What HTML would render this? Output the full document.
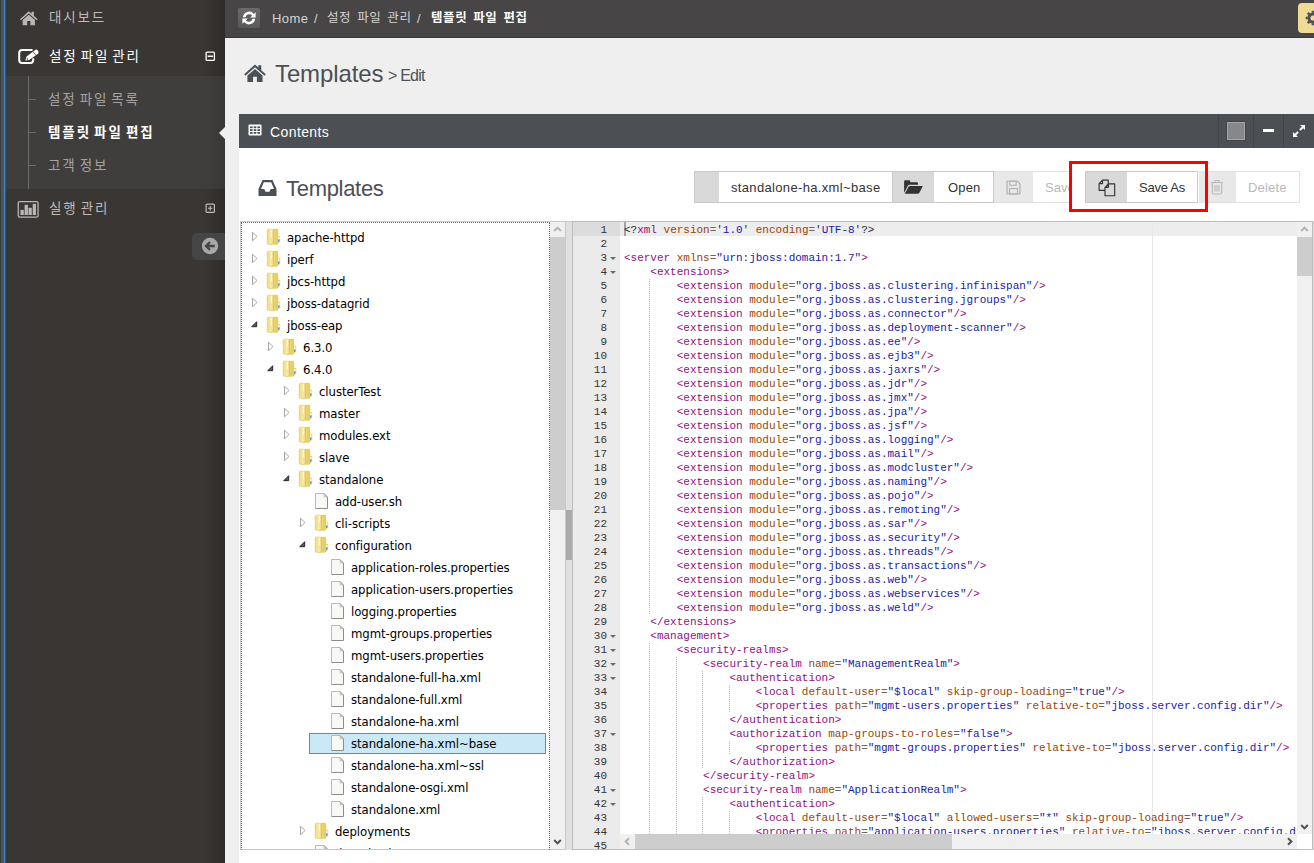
<!DOCTYPE html>
<html lang="ko"><head><meta charset="utf-8"><title>Templates &gt; Edit</title>
<style>
*{box-sizing:border-box;margin:0;padding:0}
html,body{width:1314px;height:863px;overflow:hidden}
body{position:relative;background:#efefef;font-family:"Liberation Sans","Noto Sans CJK KR",sans-serif;font-size:13px;color:#333}
.abs{position:absolute}
i{font-style:normal}
/* sidebar */
#side{left:6px;top:0;width:219px;height:863px;background:linear-gradient(to right,#3a3633 0,#3a3633 90%,#2e2b29 100%)}
#sub{left:6px;top:76px;width:219px;height:113px;background:linear-gradient(to right,#403e3d 0,#403e3d 92%,#393736 100%)}
.nav{position:absolute;left:49px;color:#c0bbb7;font-size:13.5px;letter-spacing:1.85px;word-spacing:-2.5px;line-height:20px;white-space:nowrap}
.nav.on{color:#fff}
.subnav{position:absolute;left:48px;color:#a5a3a1;font-size:13.5px;letter-spacing:1.85px;word-spacing:-2.5px;line-height:20px;white-space:nowrap}
.subnav.on{color:#fff;font-weight:bold;letter-spacing:1.9px}
/* top ribbon */
#ribbon{left:225px;top:0;width:1089px;height:38px;background:#474546;border-bottom:1px solid #3b393a}
.bc{position:absolute;top:9px;font-size:13px;line-height:20px;color:#d4d4d4;white-space:nowrap}
.bck{font-size:12.5px;top:8px;letter-spacing:.6px;word-spacing:1.9px}
/* panel */
#phead{left:239px;top:114px;width:1075px;height:34px;background:#4c4f53}
#pbody{left:239px;top:148px;width:1075px;height:715px;background:#fff}
/* toolbar */
.tb{position:absolute;top:171px;height:32px;border:1px solid #c9c9c9;background:#fff}
.tbi{position:absolute;top:0;left:0;height:30px;background:#d9d9d9}
.tbt{position:absolute;top:1px;height:30px;line-height:30px;font-size:13px;color:#333;white-space:nowrap}
/* tree */
#treebox{left:240px;top:221px;width:326px;height:629px;border:1px solid #c8c8c8;background:#fff}
#treedot{left:241px;top:222px;width:309px;height:628px;border:1px dotted #6e6e6e;border-bottom:0}
.tl{position:absolute;letter-spacing:-.06px;font-size:13px;line-height:22px;color:#000;white-space:nowrap;font-family:"DejaVu Sans Condensed","DejaVu Sans","Liberation Sans",sans-serif;font-stretch:condensed}
.sel{position:absolute;width:237px;height:21px;background:#cbe8f6;border:1px solid #26a0da}
#treeclip{left:241px;top:222px;width:309px;height:627px;overflow:hidden}
#treeclip>div{position:absolute;left:-241px;top:-222px;width:1314px;height:863px}
/* editor */
#ed{left:572px;top:221px;width:741px;height:629px;border:1px solid #bdbdbd;background:#fff;overflow:hidden;font-family:"Liberation Mono",monospace;font-size:11px;line-height:14px}
#gut{position:absolute;left:0;top:0;width:47px;height:629px;background:#ebebeb;color:#333}
#gut .gn{height:14px;text-align:right;padding-right:13px;position:relative;white-space:pre}
#gut .fw{position:absolute;right:4px;top:6px;width:0;height:0;border-left:3px solid transparent;border-right:3px solid transparent;border-top:3px solid #6b6b6b}
#code{position:absolute;left:51px;top:1px;width:800px;height:629px}
#code .ln{height:14px;white-space:pre;color:#000;letter-spacing:-.015px}
.t{color:#930f80}.a{color:#994409}.v{color:#1a1aa6}.p{color:#68685b}.m{color:#2b2b2b}.k{color:#68685b}
.ig{position:absolute;width:1px;height:14px;background:repeating-linear-gradient(to bottom,#bdbdbd 0,#bdbdbd 1px,transparent 1px,transparent 2px)}
</style></head><body>
<svg width="0" height="0" style="position:absolute">
<defs>
<linearGradient id="fg1" x1="0" y1="0" x2="1" y2="0"><stop offset="0" stop-color="#efd976"/><stop offset=".6" stop-color="#f6eaa6"/><stop offset="1" stop-color="#efdd8c"/></linearGradient>
<linearGradient id="fg2" x1="0" y1="0" x2="1" y2="0"><stop offset="0" stop-color="#ecd67a"/><stop offset="1" stop-color="#e3ca62"/></linearGradient>
<linearGradient id="fg3" x1="0" y1="0" x2="0" y2="1"><stop offset="0" stop-color="#ffffff"/><stop offset=".55" stop-color="#9fd3ef"/><stop offset="1" stop-color="#3fa3dd"/></linearGradient>
<g id="folder">
<rect x="11.2" y="8" width="2.7" height="6.4" rx=".8" fill="#ead67a" stroke="#d9c260" stroke-width=".4"/>
<rect x="6.8" y="1.1" width="5.1" height="15.3" rx="1.2" fill="url(#fg2)" stroke="#dcc463" stroke-width=".4"/>
<rect x="12.1" y="9" width="1.3" height="2.4" fill="#fff"/>
<rect x="12.1" y="11.4" width="1.3" height="2.3" fill="#3a9fe0"/>
<rect x="4" y="15.6" width="3" height="1.4" rx=".5" fill="#e3cc66"/>
<rect x="1" y="1" width="6.3" height="15.4" rx="1.4" fill="url(#fg1)" stroke="#dfc96c" stroke-width=".4"/>
<rect x="4.9" y="1.8" width=".9" height="7.4" fill="#fffef4" opacity=".95"/>
<rect x="7" y="1.4" width=".5" height="14.6" fill="#cfb54c" opacity=".8"/>
</g>
<g id="file">
<path d="M1.5 1.5 L10 1.5 L13.5 5 L13.5 16.5 L1.5 16.5 Z" fill="#f8f8f5"/>
<path d="M1.5 16.5 L1.5 1.5 L10 1.5" fill="none" stroke="#b9b9b9" stroke-width="1"/>
<path d="M10 1.5 L13.5 5 L13.5 16.5 L1.5 16.5" fill="none" stroke="#8c8c8c" stroke-width="1"/>
<path d="M10.2 2.2 L10.2 4.8 L12.8 4.8 Z" fill="#fff" stroke="#a8a8a8" stroke-width=".8"/>
</g>
<g id="home"><path d="M10 1.2 L12.8 3.6 L12.8 1.8 L15.2 1.8 L15.2 5.7 L19 9 L18 10.1 L10 3.4 L2 10.1 L1 9 Z"/><path d="M10 4.7 L16.3 9.9 L16.3 15 L11.6 15 L11.6 10.8 L8.4 10.8 L8.4 15 L3.7 15 L3.7 9.9 Z"/></g>
</defs></svg>

<!-- left strip -->
<div class="abs" style="left:0;top:0;width:1px;height:863px;background:#3a3a3a"></div>
<div class="abs" style="left:1px;top:0;width:3px;height:863px;background:#535353"></div>
<div class="abs" style="left:4px;top:0;width:1px;height:863px;background:#2b8bd8"></div>
<div class="abs" style="left:5px;top:0;width:1px;height:863px;background:#35556f"></div>

<!-- sidebar -->
<div class="abs" id="side"></div>
<div class="abs" id="sub"></div>
<svg class="abs" style="left:18.5px;top:9.7px" width="19.6" height="16.3" viewBox="0 0 20 16" preserveAspectRatio="none" fill="#b9b6b3"><use href="#home"/></svg>
<span class="nav" style="top:8px">대시보드</span>
<!-- edit icon -->
<svg class="abs" style="left:17px;top:48px" width="23" height="18" viewBox="0 0 23 18"><path d="M15.5 1.9 H5.2 Q2.2 1.9 2.2 4.9 V12 Q2.2 15 5.2 15 H13.2 Q16.2 15 16.2 12 V10.2" fill="none" stroke="#fff" stroke-width="2"/><path d="M9.58 8.54 L18.52 1.86 Q19.64 1.22 20.44 2.32 L21.34 3.62 Q21.94 4.62 21.16 5.38 L12.22 12.06 L8.3 12.5 Z" fill="#fff" stroke="#3a3633" stroke-width="1" paint-order="stroke"/><path d="M16.1 3.66 L18.76 7.18" stroke="#3a3633" stroke-width=".7"/><circle cx="10.3" cy="10.9" r=".75" fill="#3a3633"/></svg>
<span class="nav on" style="top:47px">설정 파일 관리</span>
<svg class="abs" style="left:205px;top:51px" width="11" height="11" viewBox="0 0 11 11"><rect x="1.1" y="1.1" width="8.3" height="8.3" rx="1" fill="none" stroke="#fff" stroke-width="1.3"/><path d="M2.6 5.25 H7.9" stroke="#fff" stroke-width="1.5"/></svg>
<!-- submenu tree lines -->
<div class="abs" style="left:28px;top:76px;width:1px;height:113px;background:#6e6c6a"></div>
<div class="abs" style="left:28px;top:99px;width:8px;height:1px;background:#6e6c6a"></div>
<div class="abs" style="left:28px;top:132px;width:8px;height:1px;background:#6e6c6a"></div>
<div class="abs" style="left:28px;top:165px;width:8px;height:1px;background:#6e6c6a"></div>
<span class="subnav" style="top:90px">설정 파일 목록</span>
<span class="subnav on" style="top:123px">템플릿 파일 편집</span>
<span class="subnav" style="top:156px">고객 정보</span>
<svg class="abs" style="left:219px;top:127px" width="6" height="12" viewBox="0 0 6 12"><path d="M6 0 L0 6 L6 12 Z" fill="#efefef"/></svg>
<!-- chart icon -->
<svg class="abs" style="left:17px;top:200px" width="22" height="18" viewBox="0 0 22 18"><rect x="1.25" y="1.55" width="19.8" height="15.6" rx="1.6" fill="none" stroke="#b9b6b3" stroke-width="1.3"/><rect x="3.4" y="9.9" width="3.4" height="5.1" fill="#b9b6b3"/><rect x="7.6" y="4.8" width="3.3" height="10.2" fill="#b9b6b3"/><rect x="11.5" y="7.8" width="3.3" height="7.2" fill="#b9b6b3"/><rect x="15.7" y="3.9" width="3.3" height="11.1" fill="#b9b6b3"/></svg>
<span class="nav" style="top:199px">실행 관리</span>
<svg class="abs" style="left:205px;top:203px" width="11" height="11" viewBox="0 0 11 11"><rect x="1.1" y="1.1" width="8.3" height="8.3" rx="1" fill="none" stroke="#c0bbb7" stroke-width="1.2"/><path d="M3 5.25 H7.5 M5.25 3 V7.5" stroke="#c0bbb7" stroke-width="1.2"/></svg>
<!-- minify -->
<div class="abs" style="left:192px;top:233px;width:33px;height:27px;background:#454545;border-radius:5px 0 0 5px"></div>
<svg class="abs" style="left:201px;top:237px" width="18" height="18" viewBox="0 0 18 18"><circle cx="9" cy="9" r="8.2" fill="#a8a8a8"/><path d="M13.8 9 H5.5 M9 5 L5 9 L9 13" fill="none" stroke="#454545" stroke-width="2.3"/></svg>

<!-- ribbon -->
<div class="abs" id="ribbon">
  <div class="abs" style="left:13px;top:8px;width:22px;height:20px;background:linear-gradient(#6a6a6a,#595959);border-radius:2px"></div>
  <svg class="abs" style="left:16px;top:10px" width="16" height="16" viewBox="0 0 14 14"><path d="M1.6 6.3 A5.5 5.5 0 0 1 11.3 3.4 L12.8 1.9 V6.6 H8.1 L9.8 4.9 A3.4 3.4 0 0 0 3.9 6.3 Z M12.4 7.7 A5.5 5.5 0 0 1 2.7 10.6 L1.2 12.1 V7.4 H5.9 L4.2 9.1 A3.4 3.4 0 0 0 10.1 7.7 Z" fill="#fff"/></svg>
  <span class="bc" style="left:47px;letter-spacing:.45px">Home</span><span class="bc" style="left:89px">/</span>
  <span class="bc bck" style="left:102px">설정 파일 관리</span><span class="bc" style="left:192px">/</span>
  <span class="bc bck" style="left:206px;color:#fff;font-weight:bold">템플릿 파일 편집</span>
  <div class="abs" style="left:1073px;top:3px;width:30px;height:30px;background:#efdb95;border-radius:4px"></div>
  <svg class="abs" style="left:1080px;top:10px" width="16" height="16" viewBox="0 0 18 18"><circle cx="9" cy="9" r="4.6" fill="none" stroke="#4c4f53" stroke-width="3.4"/><g stroke="#4c4f53" stroke-width="3"><path d="M9 0.8 V3 M9 15 V17.2 M0.8 9 H3 M15 9 H17.2 M3.2 3.2 L4.8 4.8 M13.2 13.2 L14.8 14.8 M3.2 14.8 L4.8 13.2 M13.2 4.8 L14.8 3.2"/></g></svg>
</div>

<!-- title -->
<svg class="abs" style="left:243px;top:63px" width="24" height="20.2" viewBox="0 0 20 16" preserveAspectRatio="none" fill="#4c4f53"><use href="#home"/></svg>
<span class="abs" style="left:275px;top:59px;font-size:24px;line-height:30px;color:#4c4f53;white-space:nowrap;letter-spacing:-.12px">Templates</span>
<span class="abs" style="left:388px;top:65px;font-size:16px;line-height:22px;color:#4c4f53;white-space:nowrap;letter-spacing:-.8px">&gt; Edit</span>

<!-- panel -->
<div class="abs" id="phead">
  <svg class="abs" style="left:9px;top:10px" width="14" height="12" viewBox="0 0 14 12"><rect x=".5" y=".5" width="13" height="11" rx="1" fill="#fff"/><g fill="#4c4f53"><rect x="2" y="2.4" width="2.6" height="1.8"/><rect x="5.7" y="2.4" width="2.6" height="1.8"/><rect x="9.4" y="2.4" width="2.6" height="1.8"/><rect x="2" y="5.2" width="2.6" height="1.8"/><rect x="5.7" y="5.2" width="2.6" height="1.8"/><rect x="9.4" y="5.2" width="2.6" height="1.8"/><rect x="2" y="8" width="2.6" height="1.8"/><rect x="5.7" y="8" width="2.6" height="1.8"/><rect x="9.4" y="8" width="2.6" height="1.8"/></g></svg>
  <span class="abs" style="left:31px;top:8px;font-size:14px;line-height:20px;color:#fff;white-space:nowrap;letter-spacing:.4px">Contents</span>
  <div class="abs" style="left:979px;top:0;width:1px;height:34px;background:#414448"></div>
  <div class="abs" style="left:1014px;top:0;width:1px;height:34px;background:#414448"></div>
  <div class="abs" style="left:1044px;top:0;width:1px;height:34px;background:#414448"></div>
  <div class="abs" style="left:988px;top:8px;width:18px;height:18px;background:#85878b;border:1px solid #a3a5a8;box-shadow:0 0 0 1px #404347"></div>
  <div class="abs" style="left:1024px;top:15px;width:11px;height:3px;background:#fff"></div>
  <svg class="abs" style="left:1053px;top:10px" width="14" height="14" viewBox="0 0 14 14"><path d="M8 1 H13 V6 L11.2 4.2 L8.6 6.8 L7.2 5.4 L9.8 2.8 Z M6 13 H1 V8 L2.8 9.8 L5.4 7.2 L6.8 8.6 L4.2 11.2 Z" fill="#fff"/></svg>
</div>
<div class="abs" id="pbody"></div>

<!-- inner heading -->
<svg class="abs" style="left:258px;top:179px" width="19" height="18" viewBox="0 0 19 17" preserveAspectRatio="none"><path d="M4.5 1 H14.5 L18.5 9.5 V16 H0.5 V9.5 Z M5.8 3 L3 9.5 H6.3 L7.5 12 H11.5 L12.7 9.5 H16 L13.2 3 Z" fill="#4c4f53" fill-rule="evenodd"/></svg>
<span class="abs" style="left:286px;top:174px;font-size:22px;line-height:30px;color:#4c4f53;white-space:nowrap;letter-spacing:-.3px">Templates</span>

<!-- toolbar -->
<div class="tb" style="left:694px;width:300px">
  <div class="tbi" style="width:24px"></div>
  <span class="tbt" style="left:36px;letter-spacing:.34px">standalone-ha.xml~base</span>
  <div class="tbi" style="left:197px;width:42px;border-left:1px solid #c9c9c9"></div>
  <svg class="abs" style="left:208px;top:7px" width="20" height="15.6" viewBox="0 0 18 14"><path d="M1 12.5 V2 Q1 1 2 1 H5.5 Q6.5 1 6.5 2 V2.8 H12.5 Q13.5 2.8 13.5 3.8 V5.2 H6 Q4.8 5.2 4.2 6.2 Z" fill="#333"/><path d="M1.6 13.2 L5 7 Q5.4 6.3 6.2 6.3 H17.2 Q18 6.3 17.6 7 L14.6 12.5 Q14.2 13.2 13.4 13.2 Z" fill="#333"/></svg>
  <span class="tbt" style="left:253px;letter-spacing:.15px">Open</span>
</div>
<div class="tb" style="left:994px;width:78px;border-color:#e1e1e1;border-left:0;border-right:0;overflow:hidden">
  <div class="tbi" style="width:39px;background:#e8e8e8"></div>
  <svg class="abs" style="left:12px;top:8px" width="15" height="15" viewBox="0 0 14 14"><path d="M1 1 H10.5 L13 3.5 V13 H1 Z" fill="none" stroke="#b5b5b5" stroke-width="1.2"/><rect x="3.5" y="1.3" width="6" height="3.6" fill="none" stroke="#b5b5b5" stroke-width="1.1"/><rect x="3.3" y="8" width="7.4" height="5" fill="none" stroke="#b5b5b5" stroke-width="1.1"/></svg>
  <span class="tbt" style="left:51px;color:#b9b9b9">Save</span>
</div>
<div class="tb" style="left:1085px;width:113px;border-color:#c9c9c9">
  <div class="tbi" style="width:41px"></div>
  <svg class="abs" style="left:12px;top:7px" width="19.4" height="18.4" viewBox="0 0 18 17"><path d="M4.2 1 H9.5 V10.5 H1 V4.2 Z M1 4.2 H4.2 V1" fill="#d9d9d9" stroke="#333" stroke-width="1.05" stroke-linejoin="round"/><path d="M9.7 4.5 H15.5 V15.5 H6.5 V7.7 Z M6.5 7.7 H9.7 V4.5" fill="#d9d9d9" stroke="#333" stroke-width="1.05" stroke-linejoin="round"/></svg>
  <span class="tbt" style="left:53px;letter-spacing:-.25px">Save As</span>
</div>
<div class="tb" style="left:1199px;width:101px;border-color:#e1e1e1;border-left:0">
  <div class="tbi" style="width:37px;background:#e8e8e8"></div>
  <svg class="abs" style="left:11px;top:7px" width="14" height="16" viewBox="0 0 14 16"><path d="M1 3.5 H13 M5 3.5 V1.5 H9 V3.5 M2.3 3.5 V13.5 Q2.3 15 3.8 15 H10.2 Q11.7 15 11.7 13.5 V3.5 M5 6 V12.5 M7 6 V12.5 M9 6 V12.5" fill="none" stroke="#b9b9b9" stroke-width="1.1"/></svg>
  <span class="tbt" style="left:49px;color:#b9b9b9;letter-spacing:.2px">Delete</span>
</div>

<!-- tree -->
<div class="abs" id="treebox"></div>
<div class="abs" id="treeclip"><div>
<svg class="abs" style="left:251px;top:231px" width="8" height="11" viewBox="0 0 8 11"><path d="M1.5 1.2 L6 5.5 L1.5 9.8 Z" fill="#fff" stroke="#a6a6a6" stroke-width="1"/></svg><svg class="abs" style="left:266px;top:228px" width="17" height="18" viewBox="0 0 17 18"><use href="#folder"/></svg><span class="tl" style="left:287px;top:227px">apache-httpd</span>
<svg class="abs" style="left:251px;top:253px" width="8" height="11" viewBox="0 0 8 11"><path d="M1.5 1.2 L6 5.5 L1.5 9.8 Z" fill="#fff" stroke="#a6a6a6" stroke-width="1"/></svg><svg class="abs" style="left:266px;top:250px" width="17" height="18" viewBox="0 0 17 18"><use href="#folder"/></svg><span class="tl" style="left:287px;top:249px">iperf</span>
<svg class="abs" style="left:251px;top:275px" width="8" height="11" viewBox="0 0 8 11"><path d="M1.5 1.2 L6 5.5 L1.5 9.8 Z" fill="#fff" stroke="#a6a6a6" stroke-width="1"/></svg><svg class="abs" style="left:266px;top:272px" width="17" height="18" viewBox="0 0 17 18"><use href="#folder"/></svg><span class="tl" style="left:287px;top:271px">jbcs-httpd</span>
<svg class="abs" style="left:251px;top:297px" width="8" height="11" viewBox="0 0 8 11"><path d="M1.5 1.2 L6 5.5 L1.5 9.8 Z" fill="#fff" stroke="#a6a6a6" stroke-width="1"/></svg><svg class="abs" style="left:266px;top:294px" width="17" height="18" viewBox="0 0 17 18"><use href="#folder"/></svg><span class="tl" style="left:287px;top:293px">jboss-datagrid</span>
<svg class="abs" style="left:250px;top:320px" width="8" height="8" viewBox="0 0 8 8"><path d="M6.7 1.7 L6.7 6.7 L1.7 6.7 Z" fill="#595959" stroke="#1e1e1e" stroke-width=".9"/></svg><svg class="abs" style="left:266px;top:316px" width="17" height="18" viewBox="0 0 17 18"><use href="#folder"/></svg><span class="tl" style="left:287px;top:315px">jboss-eap</span>
<svg class="abs" style="left:267px;top:341px" width="8" height="11" viewBox="0 0 8 11"><path d="M1.5 1.2 L6 5.5 L1.5 9.8 Z" fill="#fff" stroke="#a6a6a6" stroke-width="1"/></svg><svg class="abs" style="left:282px;top:338px" width="17" height="18" viewBox="0 0 17 18"><use href="#folder"/></svg><span class="tl" style="left:303px;top:337px">6.3.0</span>
<svg class="abs" style="left:266px;top:364px" width="8" height="8" viewBox="0 0 8 8"><path d="M6.7 1.7 L6.7 6.7 L1.7 6.7 Z" fill="#595959" stroke="#1e1e1e" stroke-width=".9"/></svg><svg class="abs" style="left:282px;top:360px" width="17" height="18" viewBox="0 0 17 18"><use href="#folder"/></svg><span class="tl" style="left:303px;top:359px">6.4.0</span>
<svg class="abs" style="left:283px;top:385px" width="8" height="11" viewBox="0 0 8 11"><path d="M1.5 1.2 L6 5.5 L1.5 9.8 Z" fill="#fff" stroke="#a6a6a6" stroke-width="1"/></svg><svg class="abs" style="left:298px;top:382px" width="17" height="18" viewBox="0 0 17 18"><use href="#folder"/></svg><span class="tl" style="left:319px;top:381px">clusterTest</span>
<svg class="abs" style="left:283px;top:407px" width="8" height="11" viewBox="0 0 8 11"><path d="M1.5 1.2 L6 5.5 L1.5 9.8 Z" fill="#fff" stroke="#a6a6a6" stroke-width="1"/></svg><svg class="abs" style="left:298px;top:404px" width="17" height="18" viewBox="0 0 17 18"><use href="#folder"/></svg><span class="tl" style="left:319px;top:403px">master</span>
<svg class="abs" style="left:283px;top:429px" width="8" height="11" viewBox="0 0 8 11"><path d="M1.5 1.2 L6 5.5 L1.5 9.8 Z" fill="#fff" stroke="#a6a6a6" stroke-width="1"/></svg><svg class="abs" style="left:298px;top:426px" width="17" height="18" viewBox="0 0 17 18"><use href="#folder"/></svg><span class="tl" style="left:319px;top:425px">modules.ext</span>
<svg class="abs" style="left:283px;top:451px" width="8" height="11" viewBox="0 0 8 11"><path d="M1.5 1.2 L6 5.5 L1.5 9.8 Z" fill="#fff" stroke="#a6a6a6" stroke-width="1"/></svg><svg class="abs" style="left:298px;top:448px" width="17" height="18" viewBox="0 0 17 18"><use href="#folder"/></svg><span class="tl" style="left:319px;top:447px">slave</span>
<svg class="abs" style="left:282px;top:474px" width="8" height="8" viewBox="0 0 8 8"><path d="M6.7 1.7 L6.7 6.7 L1.7 6.7 Z" fill="#595959" stroke="#1e1e1e" stroke-width=".9"/></svg><svg class="abs" style="left:298px;top:470px" width="17" height="18" viewBox="0 0 17 18"><use href="#folder"/></svg><span class="tl" style="left:319px;top:469px">standalone</span>
<svg class="abs" style="left:314px;top:492px" width="15" height="18" viewBox="0 0 15 18"><use href="#file"/></svg><span class="tl" style="left:335px;top:491px">add-user.sh</span>
<svg class="abs" style="left:299px;top:517px" width="8" height="11" viewBox="0 0 8 11"><path d="M1.5 1.2 L6 5.5 L1.5 9.8 Z" fill="#fff" stroke="#a6a6a6" stroke-width="1"/></svg><svg class="abs" style="left:314px;top:514px" width="17" height="18" viewBox="0 0 17 18"><use href="#folder"/></svg><span class="tl" style="left:335px;top:513px">cli-scripts</span>
<svg class="abs" style="left:298px;top:540px" width="8" height="8" viewBox="0 0 8 8"><path d="M6.7 1.7 L6.7 6.7 L1.7 6.7 Z" fill="#595959" stroke="#1e1e1e" stroke-width=".9"/></svg><svg class="abs" style="left:314px;top:536px" width="17" height="18" viewBox="0 0 17 18"><use href="#folder"/></svg><span class="tl" style="left:335px;top:535px">configuration</span>
<svg class="abs" style="left:330px;top:558px" width="15" height="18" viewBox="0 0 15 18"><use href="#file"/></svg><span class="tl" style="left:351px;top:557px">application-roles.properties</span>
<svg class="abs" style="left:330px;top:580px" width="15" height="18" viewBox="0 0 15 18"><use href="#file"/></svg><span class="tl" style="left:351px;top:579px">application-users.properties</span>
<svg class="abs" style="left:330px;top:602px" width="15" height="18" viewBox="0 0 15 18"><use href="#file"/></svg><span class="tl" style="left:351px;top:601px">logging.properties</span>
<svg class="abs" style="left:330px;top:624px" width="15" height="18" viewBox="0 0 15 18"><use href="#file"/></svg><span class="tl" style="left:351px;top:623px">mgmt-groups.properties</span>
<svg class="abs" style="left:330px;top:646px" width="15" height="18" viewBox="0 0 15 18"><use href="#file"/></svg><span class="tl" style="left:351px;top:645px">mgmt-users.properties</span>
<svg class="abs" style="left:330px;top:668px" width="15" height="18" viewBox="0 0 15 18"><use href="#file"/></svg><span class="tl" style="left:351px;top:667px">standalone-full-ha.xml</span>
<svg class="abs" style="left:330px;top:690px" width="15" height="18" viewBox="0 0 15 18"><use href="#file"/></svg><span class="tl" style="left:351px;top:689px">standalone-full.xml</span>
<svg class="abs" style="left:330px;top:712px" width="15" height="18" viewBox="0 0 15 18"><use href="#file"/></svg><span class="tl" style="left:351px;top:711px">standalone-ha.xml</span>
<div class="sel" style="left:309px;top:733px"></div><svg class="abs" style="left:330px;top:734px" width="15" height="18" viewBox="0 0 15 18"><use href="#file"/></svg><span class="tl" style="left:351px;top:733px">standalone-ha.xml~base</span>
<svg class="abs" style="left:330px;top:756px" width="15" height="18" viewBox="0 0 15 18"><use href="#file"/></svg><span class="tl" style="left:351px;top:755px">standalone-ha.xml~ssl</span>
<svg class="abs" style="left:330px;top:778px" width="15" height="18" viewBox="0 0 15 18"><use href="#file"/></svg><span class="tl" style="left:351px;top:777px">standalone-osgi.xml</span>
<svg class="abs" style="left:330px;top:800px" width="15" height="18" viewBox="0 0 15 18"><use href="#file"/></svg><span class="tl" style="left:351px;top:799px">standalone.xml</span>
<svg class="abs" style="left:299px;top:825px" width="8" height="11" viewBox="0 0 8 11"><path d="M1.5 1.2 L6 5.5 L1.5 9.8 Z" fill="#fff" stroke="#a6a6a6" stroke-width="1"/></svg><svg class="abs" style="left:314px;top:822px" width="17" height="18" viewBox="0 0 17 18"><use href="#folder"/></svg><span class="tl" style="left:335px;top:821px">deployments</span>
<svg class="abs" style="left:314px;top:844px" width="15" height="18" viewBox="0 0 15 18"><use href="#file"/></svg><span class="tl" style="left:335px;top:843px">domain.sh</span>
</div></div>
<div class="abs" id="treedot"></div>
<!-- tree scrollbar -->
<div class="abs" style="left:550px;top:222px;width:15px;height:627px;background:#f0f0f0"></div>
<div class="abs" style="left:550px;top:237px;width:15px;height:273px;background:#cdcdcd"></div>
<svg class="abs" style="left:553px;top:225px" width="9" height="8" viewBox="0 0 9 8"><path d="M1.2 6 L4.5 2.6 L7.8 6" fill="none" stroke="#b4b4b4" stroke-width="2"/></svg>
<svg class="abs" style="left:553px;top:838px" width="9" height="8" viewBox="0 0 9 8"><path d="M1.2 2 L4.5 5.4 L7.8 2" fill="none" stroke="#505050" stroke-width="2"/></svg>
<!-- splitter -->
<div class="abs" style="left:566px;top:221px;width:6px;height:1px;background:#c8c8c8"></div>
<div class="abs" style="left:566px;top:222px;width:6px;height:628px;background:#e0e0e0"></div>
<div class="abs" style="left:566px;top:510px;width:6px;height:50px;background:#aaa"></div>

<!-- editor -->
<div class="abs" id="ed">
 <div class="abs" style="left:0;top:0;width:47px;height:14px;background:#dcdcdc;z-index:1"></div>
 <div id="gut"><div style="position:relative;z-index:2;top:1px">
<div class="gn">1</div>
<div class="gn">2</div>
<div class="gn">3<i class="fw"></i></div>
<div class="gn">4<i class="fw"></i></div>
<div class="gn">5</div>
<div class="gn">6</div>
<div class="gn">7</div>
<div class="gn">8</div>
<div class="gn">9</div>
<div class="gn">10</div>
<div class="gn">11</div>
<div class="gn">12</div>
<div class="gn">13</div>
<div class="gn">14</div>
<div class="gn">15</div>
<div class="gn">16</div>
<div class="gn">17</div>
<div class="gn">18</div>
<div class="gn">19</div>
<div class="gn">20</div>
<div class="gn">21</div>
<div class="gn">22</div>
<div class="gn">23</div>
<div class="gn">24</div>
<div class="gn">25</div>
<div class="gn">26</div>
<div class="gn">27</div>
<div class="gn">28</div>
<div class="gn">29</div>
<div class="gn">30<i class="fw"></i></div>
<div class="gn">31<i class="fw"></i></div>
<div class="gn">32<i class="fw"></i></div>
<div class="gn">33<i class="fw"></i></div>
<div class="gn">34</div>
<div class="gn">35</div>
<div class="gn">36</div>
<div class="gn">37<i class="fw"></i></div>
<div class="gn">38</div>
<div class="gn">39</div>
<div class="gn">40</div>
<div class="gn">41<i class="fw"></i></div>
<div class="gn">42<i class="fw"></i></div>
<div class="gn">43</div>
<div class="gn">44</div>
<div class="gn">45</div>
 </div></div>
 <div class="abs" style="left:47px;top:0;width:700px;height:14px;background:rgba(0,0,0,.07)"></div>
 <div class="abs" style="left:579px;top:0;width:1px;height:629px;background:#e8e8e8"></div>
 <div class="abs" style="left:51px;top:0;width:2px;height:14px;background:#a2a2a2"></div>
 <div id="code">
<i class="ig" style="left:25.4px;top:56px"></i><i class="ig" style="left:25.4px;top:70px"></i><i class="ig" style="left:25.4px;top:84px"></i><i class="ig" style="left:25.4px;top:98px"></i><i class="ig" style="left:25.4px;top:112px"></i><i class="ig" style="left:25.4px;top:126px"></i><i class="ig" style="left:25.4px;top:140px"></i><i class="ig" style="left:25.4px;top:154px"></i><i class="ig" style="left:25.4px;top:168px"></i><i class="ig" style="left:25.4px;top:182px"></i><i class="ig" style="left:25.4px;top:196px"></i><i class="ig" style="left:25.4px;top:210px"></i><i class="ig" style="left:25.4px;top:224px"></i><i class="ig" style="left:25.4px;top:238px"></i><i class="ig" style="left:25.4px;top:252px"></i><i class="ig" style="left:25.4px;top:266px"></i><i class="ig" style="left:25.4px;top:280px"></i><i class="ig" style="left:25.4px;top:294px"></i><i class="ig" style="left:25.4px;top:308px"></i><i class="ig" style="left:25.4px;top:322px"></i><i class="ig" style="left:25.4px;top:336px"></i><i class="ig" style="left:25.4px;top:350px"></i><i class="ig" style="left:25.4px;top:364px"></i><i class="ig" style="left:25.4px;top:378px"></i><i class="ig" style="left:25.4px;top:420px"></i><i class="ig" style="left:25.4px;top:434px"></i><i class="ig" style="left:51.8px;top:434px"></i><i class="ig" style="left:25.4px;top:448px"></i><i class="ig" style="left:51.8px;top:448px"></i><i class="ig" style="left:78.2px;top:448px"></i><i class="ig" style="left:25.4px;top:462px"></i><i class="ig" style="left:51.8px;top:462px"></i><i class="ig" style="left:78.2px;top:462px"></i><i class="ig" style="left:104.6px;top:462px"></i><i class="ig" style="left:25.4px;top:476px"></i><i class="ig" style="left:51.8px;top:476px"></i><i class="ig" style="left:78.2px;top:476px"></i><i class="ig" style="left:104.6px;top:476px"></i><i class="ig" style="left:25.4px;top:490px"></i><i class="ig" style="left:51.8px;top:490px"></i><i class="ig" style="left:78.2px;top:490px"></i><i class="ig" style="left:25.4px;top:504px"></i><i class="ig" style="left:51.8px;top:504px"></i><i class="ig" style="left:78.2px;top:504px"></i><i class="ig" style="left:25.4px;top:518px"></i><i class="ig" style="left:51.8px;top:518px"></i><i class="ig" style="left:78.2px;top:518px"></i><i class="ig" style="left:104.6px;top:518px"></i><i class="ig" style="left:25.4px;top:532px"></i><i class="ig" style="left:51.8px;top:532px"></i><i class="ig" style="left:78.2px;top:532px"></i><i class="ig" style="left:25.4px;top:546px"></i><i class="ig" style="left:51.8px;top:546px"></i><i class="ig" style="left:25.4px;top:560px"></i><i class="ig" style="left:51.8px;top:560px"></i><i class="ig" style="left:25.4px;top:574px"></i><i class="ig" style="left:51.8px;top:574px"></i><i class="ig" style="left:78.2px;top:574px"></i><i class="ig" style="left:25.4px;top:588px"></i><i class="ig" style="left:51.8px;top:588px"></i><i class="ig" style="left:78.2px;top:588px"></i><i class="ig" style="left:104.6px;top:588px"></i><i class="ig" style="left:25.4px;top:602px"></i><i class="ig" style="left:51.8px;top:602px"></i><i class="ig" style="left:78.2px;top:602px"></i><i class="ig" style="left:104.6px;top:602px"></i><i class="ig" style="left:25.4px;top:616px"></i><i class="ig" style="left:51.8px;top:616px"></i><i class="ig" style="left:78.2px;top:616px"></i>
<div class="ln"><span class="m">&lt;?</span><span class="t">xml</span> <span class="a">version</span><span class="k">=</span><span class="v">&#x27;1.0&#x27;</span> <span class="a">encoding</span><span class="k">=</span><span class="v">&#x27;UTF-8&#x27;</span><span class="m">?&gt;</span></div>
<div class="ln"></div>
<div class="ln"><span class="t">&lt;server</span> <span class="a">xmlns</span><span class="k">=</span><span class="v">&quot;urn:jboss:domain:1.7&quot;</span><span class="t">&gt;</span></div>
<div class="ln">    <span class="t">&lt;extensions&gt;</span></div>
<div class="ln">        <span class="t">&lt;extension</span> <span class="a">module</span><span class="k">=</span><span class="v">&quot;org.jboss.as.clustering.infinispan&quot;</span><span class="t">/&gt;</span></div>
<div class="ln">        <span class="t">&lt;extension</span> <span class="a">module</span><span class="k">=</span><span class="v">&quot;org.jboss.as.clustering.jgroups&quot;</span><span class="t">/&gt;</span></div>
<div class="ln">        <span class="t">&lt;extension</span> <span class="a">module</span><span class="k">=</span><span class="v">&quot;org.jboss.as.connector&quot;</span><span class="t">/&gt;</span></div>
<div class="ln">        <span class="t">&lt;extension</span> <span class="a">module</span><span class="k">=</span><span class="v">&quot;org.jboss.as.deployment-scanner&quot;</span><span class="t">/&gt;</span></div>
<div class="ln">        <span class="t">&lt;extension</span> <span class="a">module</span><span class="k">=</span><span class="v">&quot;org.jboss.as.ee&quot;</span><span class="t">/&gt;</span></div>
<div class="ln">        <span class="t">&lt;extension</span> <span class="a">module</span><span class="k">=</span><span class="v">&quot;org.jboss.as.ejb3&quot;</span><span class="t">/&gt;</span></div>
<div class="ln">        <span class="t">&lt;extension</span> <span class="a">module</span><span class="k">=</span><span class="v">&quot;org.jboss.as.jaxrs&quot;</span><span class="t">/&gt;</span></div>
<div class="ln">        <span class="t">&lt;extension</span> <span class="a">module</span><span class="k">=</span><span class="v">&quot;org.jboss.as.jdr&quot;</span><span class="t">/&gt;</span></div>
<div class="ln">        <span class="t">&lt;extension</span> <span class="a">module</span><span class="k">=</span><span class="v">&quot;org.jboss.as.jmx&quot;</span><span class="t">/&gt;</span></div>
<div class="ln">        <span class="t">&lt;extension</span> <span class="a">module</span><span class="k">=</span><span class="v">&quot;org.jboss.as.jpa&quot;</span><span class="t">/&gt;</span></div>
<div class="ln">        <span class="t">&lt;extension</span> <span class="a">module</span><span class="k">=</span><span class="v">&quot;org.jboss.as.jsf&quot;</span><span class="t">/&gt;</span></div>
<div class="ln">        <span class="t">&lt;extension</span> <span class="a">module</span><span class="k">=</span><span class="v">&quot;org.jboss.as.logging&quot;</span><span class="t">/&gt;</span></div>
<div class="ln">        <span class="t">&lt;extension</span> <span class="a">module</span><span class="k">=</span><span class="v">&quot;org.jboss.as.mail&quot;</span><span class="t">/&gt;</span></div>
<div class="ln">        <span class="t">&lt;extension</span> <span class="a">module</span><span class="k">=</span><span class="v">&quot;org.jboss.as.modcluster&quot;</span><span class="t">/&gt;</span></div>
<div class="ln">        <span class="t">&lt;extension</span> <span class="a">module</span><span class="k">=</span><span class="v">&quot;org.jboss.as.naming&quot;</span><span class="t">/&gt;</span></div>
<div class="ln">        <span class="t">&lt;extension</span> <span class="a">module</span><span class="k">=</span><span class="v">&quot;org.jboss.as.pojo&quot;</span><span class="t">/&gt;</span></div>
<div class="ln">        <span class="t">&lt;extension</span> <span class="a">module</span><span class="k">=</span><span class="v">&quot;org.jboss.as.remoting&quot;</span><span class="t">/&gt;</span></div>
<div class="ln">        <span class="t">&lt;extension</span> <span class="a">module</span><span class="k">=</span><span class="v">&quot;org.jboss.as.sar&quot;</span><span class="t">/&gt;</span></div>
<div class="ln">        <span class="t">&lt;extension</span> <span class="a">module</span><span class="k">=</span><span class="v">&quot;org.jboss.as.security&quot;</span><span class="t">/&gt;</span></div>
<div class="ln">        <span class="t">&lt;extension</span> <span class="a">module</span><span class="k">=</span><span class="v">&quot;org.jboss.as.threads&quot;</span><span class="t">/&gt;</span></div>
<div class="ln">        <span class="t">&lt;extension</span> <span class="a">module</span><span class="k">=</span><span class="v">&quot;org.jboss.as.transactions&quot;</span><span class="t">/&gt;</span></div>
<div class="ln">        <span class="t">&lt;extension</span> <span class="a">module</span><span class="k">=</span><span class="v">&quot;org.jboss.as.web&quot;</span><span class="t">/&gt;</span></div>
<div class="ln">        <span class="t">&lt;extension</span> <span class="a">module</span><span class="k">=</span><span class="v">&quot;org.jboss.as.webservices&quot;</span><span class="t">/&gt;</span></div>
<div class="ln">        <span class="t">&lt;extension</span> <span class="a">module</span><span class="k">=</span><span class="v">&quot;org.jboss.as.weld&quot;</span><span class="t">/&gt;</span></div>
<div class="ln">    <span class="t">&lt;/extensions&gt;</span></div>
<div class="ln">    <span class="t">&lt;management&gt;</span></div>
<div class="ln">        <span class="t">&lt;security-realms&gt;</span></div>
<div class="ln">            <span class="t">&lt;security-realm</span> <span class="a">name</span><span class="k">=</span><span class="v">&quot;ManagementRealm&quot;</span><span class="t">&gt;</span></div>
<div class="ln">                <span class="t">&lt;authentication&gt;</span></div>
<div class="ln">                    <span class="t">&lt;local</span> <span class="a">default-user</span><span class="k">=</span><span class="v">&quot;$local&quot;</span> <span class="a">skip-group-loading</span><span class="k">=</span><span class="v">&quot;true&quot;</span><span class="t">/&gt;</span></div>
<div class="ln">                    <span class="t">&lt;properties</span> <span class="a">path</span><span class="k">=</span><span class="v">&quot;mgmt-users.properties&quot;</span> <span class="a">relative-to</span><span class="k">=</span><span class="v">&quot;jboss.server.config.dir&quot;</span><span class="t">/&gt;</span></div>
<div class="ln">                <span class="t">&lt;/authentication&gt;</span></div>
<div class="ln">                <span class="t">&lt;authorization</span> <span class="a">map-groups-to-roles</span><span class="k">=</span><span class="v">&quot;false&quot;</span><span class="t">&gt;</span></div>
<div class="ln">                    <span class="t">&lt;properties</span> <span class="a">path</span><span class="k">=</span><span class="v">&quot;mgmt-groups.properties&quot;</span> <span class="a">relative-to</span><span class="k">=</span><span class="v">&quot;jboss.server.config.dir&quot;</span><span class="t">/&gt;</span></div>
<div class="ln">                <span class="t">&lt;/authorization&gt;</span></div>
<div class="ln">            <span class="t">&lt;/security-realm&gt;</span></div>
<div class="ln">            <span class="t">&lt;security-realm</span> <span class="a">name</span><span class="k">=</span><span class="v">&quot;ApplicationRealm&quot;</span><span class="t">&gt;</span></div>
<div class="ln">                <span class="t">&lt;authentication&gt;</span></div>
<div class="ln">                    <span class="t">&lt;local</span> <span class="a">default-user</span><span class="k">=</span><span class="v">&quot;$local&quot;</span> <span class="a">allowed-users</span><span class="k">=</span><span class="v">&quot;*&quot;</span> <span class="a">skip-group-loading</span><span class="k">=</span><span class="v">&quot;true&quot;</span><span class="t">/&gt;</span></div>
<div class="ln">                    <span class="t">&lt;properties</span> <span class="a">path</span><span class="k">=</span><span class="v">&quot;application-users.properties&quot;</span> <span class="a">relative-to</span><span class="k">=</span><span class="v">&quot;jboss.server.config.dir&quot;</span><span class="t">/&gt;</span></div>
<div class="ln">                <span class="t">&lt;/authentication&gt;</span></div>
 </div>
 <!-- scrollbars -->
 <div class="abs" style="left:724px;top:0;width:15px;height:612px;background:#f0f0f0"></div>
 <div class="abs" style="left:724px;top:15px;width:15px;height:39px;background:#cdcdcd"></div>
 <svg class="abs" style="left:727px;top:3px" width="9" height="8" viewBox="0 0 9 8"><path d="M1.2 6 L4.5 2.6 L7.8 6" fill="none" stroke="#b4b4b4" stroke-width="2"/></svg>
 <svg class="abs" style="left:727px;top:601px" width="9" height="8" viewBox="0 0 9 8"><path d="M1.2 2 L4.5 5.4 L7.8 2" fill="none" stroke="#505050" stroke-width="2"/></svg>
 <div class="abs" style="left:47px;top:612px;width:677px;height:15px;background:#f0f0f0"></div>
 <div class="abs" style="left:724px;top:612px;width:15px;height:15px;background:#fff"></div>
 <div class="abs" style="left:62px;top:612px;width:317px;height:15px;background:#cdcdcd"></div>
 <svg class="abs" style="left:50px;top:615px" width="8" height="9" viewBox="0 0 8 9"><path d="M6 1.2 L2.6 4.5 L6 7.8" fill="none" stroke="#b4b4b4" stroke-width="2"/></svg>
 <svg class="abs" style="left:713px;top:615px" width="8" height="9" viewBox="0 0 8 9"><path d="M2 1.2 L5.4 4.5 L2 7.8" fill="none" stroke="#505050" stroke-width="2"/></svg>
</div>

<div class="abs" style="left:1313px;top:221px;width:1px;height:629px;background:#dcdcdc"></div>
<!-- highlight box -->
<div class="abs" style="left:1069px;top:161px;width:139px;height:51px;border:3px solid #f00"></div>
</body></html>
